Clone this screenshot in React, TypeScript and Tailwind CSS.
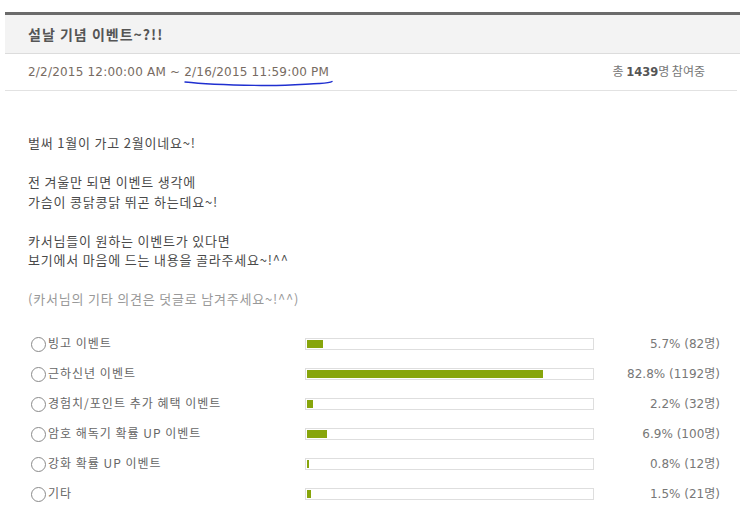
import React from "react";

const KR = { fontFamily: '"Noto Sans CJK KR", "Noto Sans", sans-serif' };
const LAT = { fontFamily: '"DejaVu Sans", "Noto Sans CJK KR", sans-serif' };

const items = [
  { label: "빙고 이벤트", pct: 5.7, n: 82 },
  { label: "근하신년 이벤트", pct: 82.8, n: 1192 },
  { label: "경험치/포인트 추가 혜택 이벤트", pct: 2.2, n: 32 },
  { label: "암호 해독기 확률 UP 이벤트", pct: 6.9, n: 100 },
  { label: "강화 확률 UP 이벤트", pct: 0.8, n: 12 },
  { label: "기타", pct: 1.5, n: 21 },
];

export default function App() {
  return (
    <div className="w-[740px] h-[523px] bg-white pt-[12px] pl-[5px] overflow-hidden" style={KR}>
      <div className="border-t-[3px] border-[#6b6b6b]">
        <div className="h-[39px] bg-[#f3f3f3] border-b border-[#dcdcdc] flex items-center pl-[23px]">
          <span className="text-[14px] font-bold text-[#555] tracking-[1px]" style={KR}>
            설날 기념 이벤트~?!!
          </span>
        </div>
        <div className="relative h-[37px] border-b border-[#e2e2e2] flex items-center justify-between pl-[23px] pr-[32px] mr-[3px]">
          <span className="text-[12px] text-[#776b62] tracking-[0.2px]" style={LAT}>
            2/2/2015 12:00:00 AM ~ 2/16/2015 11:59:00 PM
          </span>
          <span className="text-[12px] text-[#777]" style={KR}>
            총 <b className="text-[#555] text-[11.5px]" style={LAT}>1439</b>명 참여중
          </span>
          <svg className="absolute left-[178px] top-[26px]" width="152" height="10" viewBox="0 0 152 10">
            <path
              d="M2 2 C 20 4, 45 5, 78 5.5 C 104 6, 122 4, 136 3.5 C 142 3.2, 147 3, 149 1.5"
              fill="none"
              stroke="#1f2fd0"
              strokeWidth="1.4"
              strokeLinecap="round"
            />
          </svg>
        </div>
        <div className="pl-[23px] pt-[42px] text-[13px] leading-[19.5px] text-[#4a4a4a] tracking-[0.8px]">
          <p>벌써 1월이 가고 2월이네요~!</p>
          <p>&nbsp;</p>
          <p>전 겨울만 되면 이벤트 생각에</p>
          <p>가슴이 콩닭콩닭 뛰곤 하는데요~!</p>
          <p>&nbsp;</p>
          <p>카서님들이 원하는 이벤트가 있다면</p>
          <p>보기에서 마음에 드는 내용을 골라주세요~!^^</p>
          <p>&nbsp;</p>
          <p className="text-[#999]">(카서님의 기타 의견은 덧글로 남겨주세요~!^^)</p>
        </div>
        <div className="pl-[26px] pr-[20px] pt-[19px]">
          {items.map((it) => (
            <div key={it.label} className="h-[30px] grid grid-cols-[274px_289px_1fr] items-center">
              <div className="flex items-center">
                <span className="w-[15px] h-[15px] rounded-full border-[1.5px] border-[#8a8a8a] mt-[3px] mr-[2px] shrink-0" />
                <span className="text-[12px] text-[#666] tracking-[1px]" style={KR}>
                  {it.label}
                </span>
              </div>
              <div className="h-[12px] border border-[#dedede] bg-white p-[1px] mt-[2px]">
                <div className="h-full bg-[#87a50b]" style={{ width: `${it.pct}%` }} />
              </div>
              <div className="text-right text-[12px] text-[#777] pt-[3px]" style={LAT}>
                {it.pct}% ({it.n}명)
              </div>
            </div>
          ))}
        </div>
      </div>
    </div>
  );
}
